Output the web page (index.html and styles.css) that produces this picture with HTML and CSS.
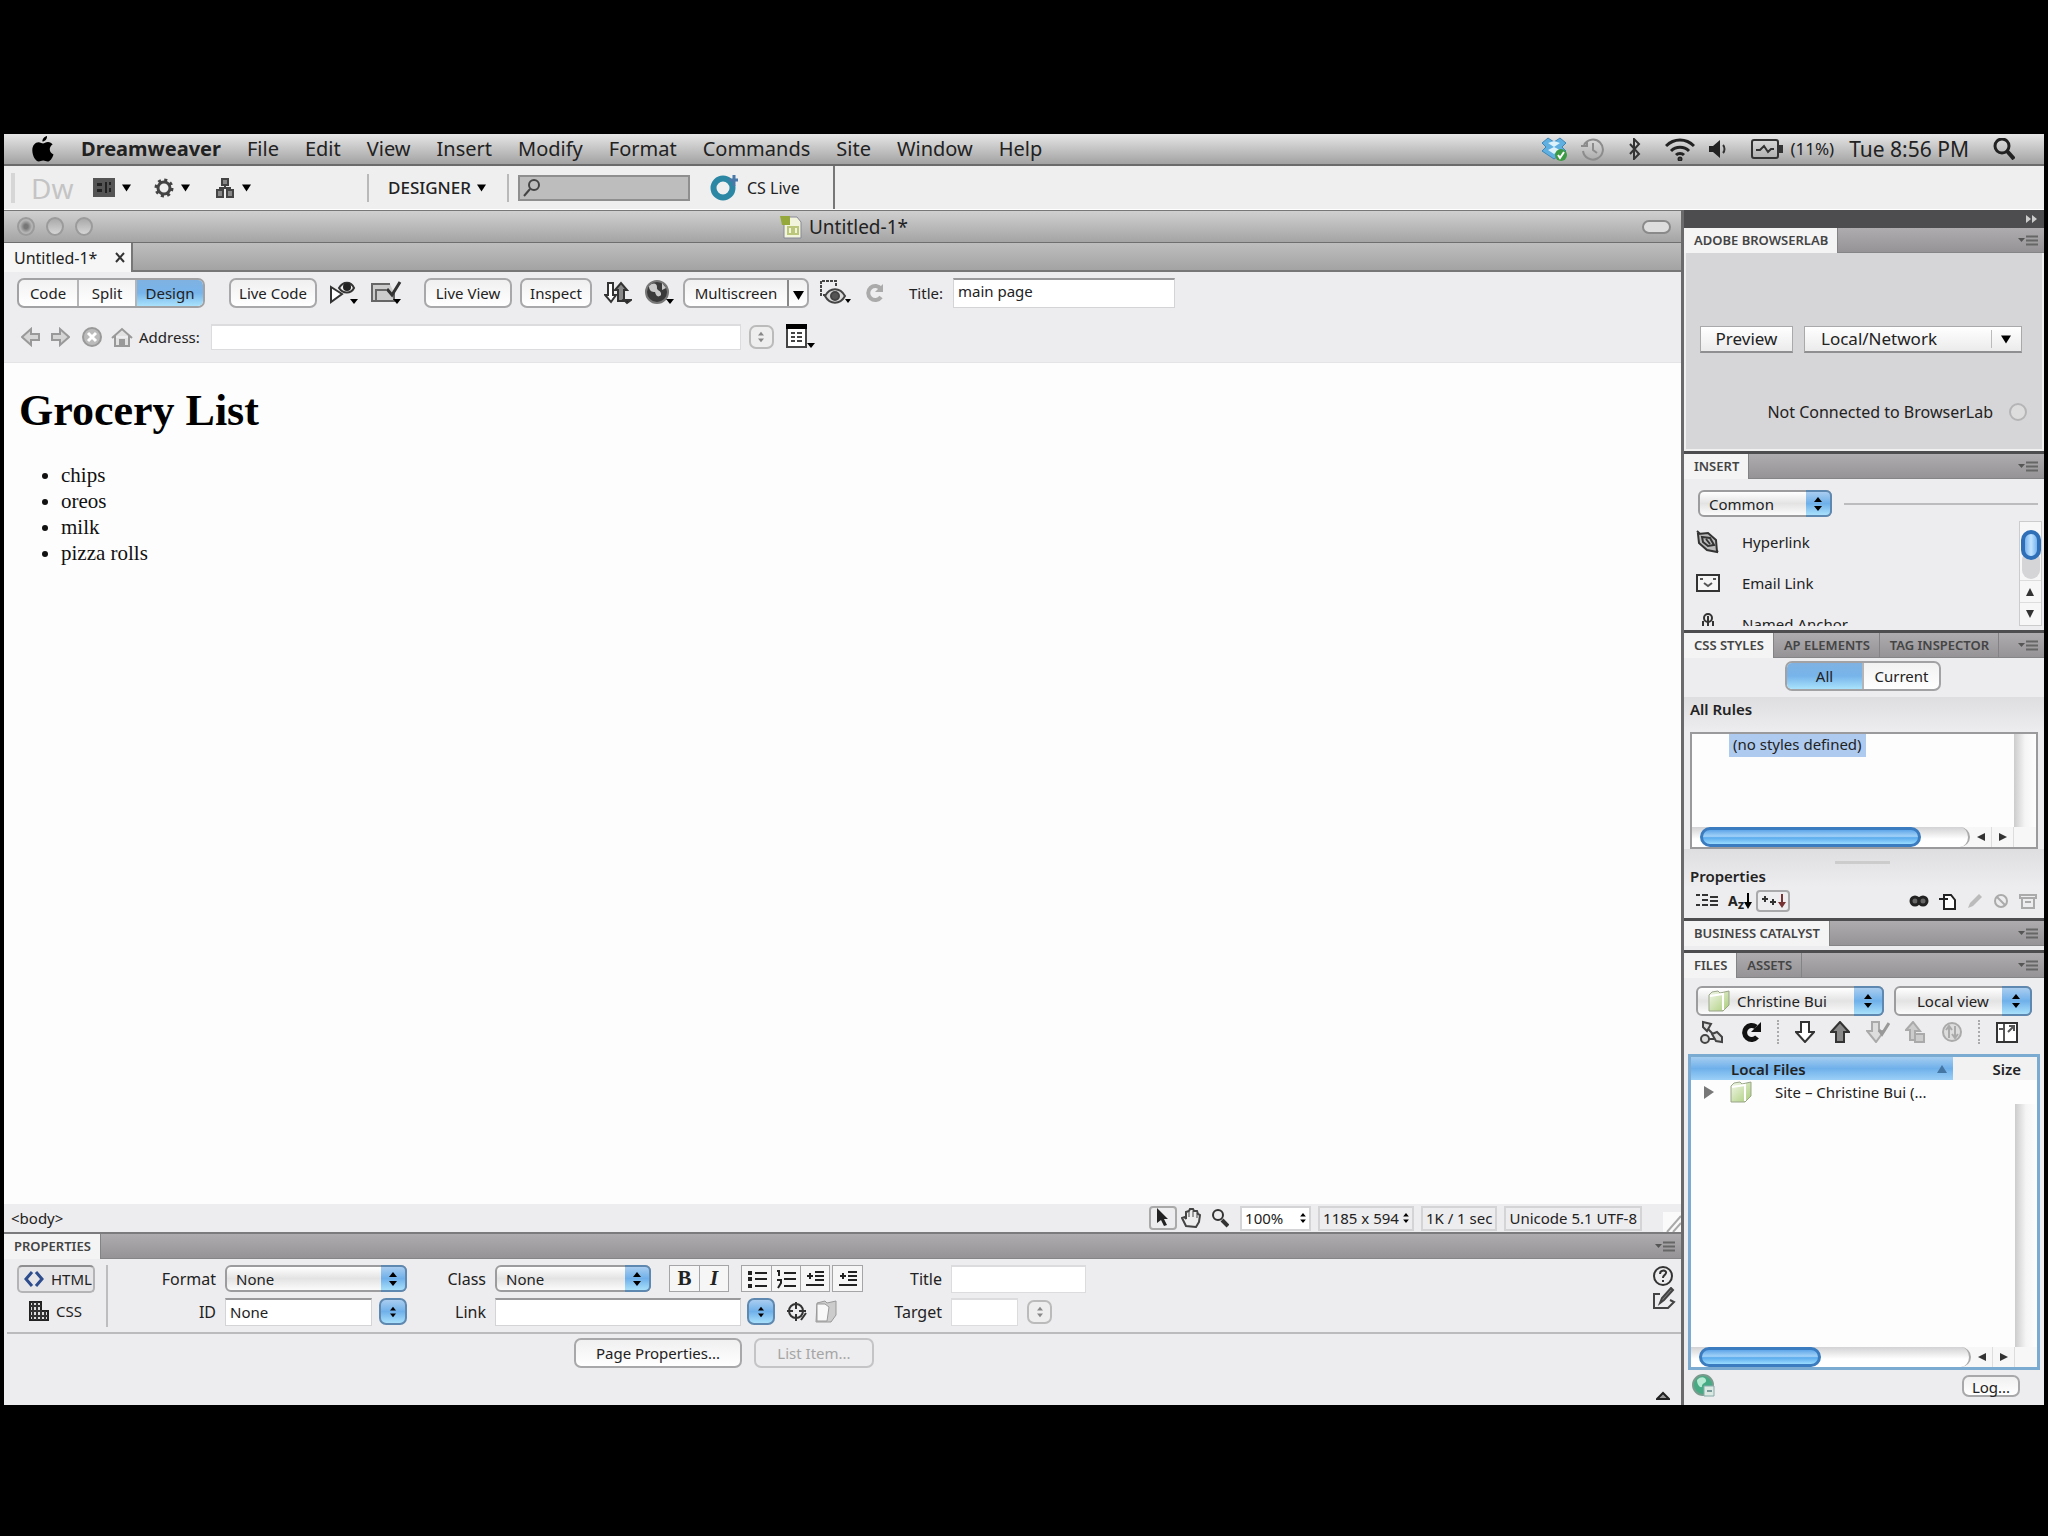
FILE: index.html
```html
<!DOCTYPE html>
<html lang="en">
<head>
  <meta charset="UTF-8">
  <title>Dreamweaver - Untitled-1*</title>
  <link rel="stylesheet" href="styles.css">
</head>
<body>

  <!-- Shared shapes -->
  <svg class="defs" width="0" height="0" aria-hidden="true">
    <defs>
      <linearGradient id="green" x1="0" y1="0" x2="1" y2="1">
        <stop offset="0" stop-color="#f4f8ec"/><stop offset="1" stop-color="#a9cc78"/>
      </linearGradient>
      <symbol id="down" viewBox="0 0 10 8"><path d="M0 0h10L5 8z"/></symbol>
      <symbol id="steps" viewBox="0 0 8 14"><path d="M4 0l4 5H0zM4 14l4-5H0z"/></symbol>
      <symbol id="panel-menu" viewBox="0 0 20 11"><path d="M0 3h7L3.500 7z"/><path d="M8 1.500h12M8 5.500h12M8 9.500h12" stroke="#666" stroke-width="2"/></symbol>
      <symbol id="folder" viewBox="0 0 24 24"><path d="M5 3l6-1 2 2 9-2v14l-6 6H2V6z" fill="url(#green)" stroke="#9aa58a"/><path d="M3 7l13-2v16" fill="none" stroke="#fff" stroke-width="2"/></symbol>
      <symbol id="arrow-down" viewBox="0 0 20 22"><path d="M6 1h8v10h5l-9 10-9-10h5z" stroke-width="2"/></symbol>
      <symbol id="arrow-up" viewBox="0 0 20 22"><path d="M6 21h8V11h5L10 1 1 11h5z" stroke-width="2"/></symbol>
    </defs>
  </svg>

  <div class="screen">

    <!-- System menu bar -->
    <header class="menubar">
      <svg class="apple" width="22" height="26" viewBox="0 0 22 26"><path d="M15 0c.3 3-2 5.500-4.600 5.600C10.200 3 12.500.5 15 0zM11 7.500c1.300 0 2.600-1.400 5-1.400 2 0 3.600 1 4.600 2.400-4.200 2.600-3.500 8.200.9 9.900C20.400 22 18 25.500 15.600 25.500c-1.700 0-2.400-1-4.400-1s-2.800 1-4.400 1C3.500 25.500.3 19.500.3 14.200c0-5 3-8 6.200-8 2 0 3.500 1.300 4.500 1.300z"/></svg>
      <nav class="menus">
        <button class="app-name">Dreamweaver</button>
        <button>File</button>
        <button>Edit</button>
        <button>View</button>
        <button>Insert</button>
        <button>Modify</button>
        <button>Format</button>
        <button>Commands</button>
        <button>Site</button>
        <button>Window</button>
        <button>Help</button>
      </nav>
      <div class="tray">
        <svg width="26" height="26" viewBox="0 0 26 26"><path d="M7 2l6 4 6-4 6 5-4 4 4 4-6 4-6 4-6-4-6-4 4-4-4-4z" fill="#5fb0e0" stroke="#3d87b8"/><path d="M7 7l6 4 6-4-6-2zM7 14l6-3 6 3-6 4z" fill="#def2fc"/><circle cx="20" cy="19" r="6" fill="#3c9a44"/><path d="M17 19l2 3 4-6" fill="none" stroke="#fff" stroke-width="2"/></svg>
        <svg width="24" height="24" viewBox="0 0 24 24" fill="none" stroke="#8c8c8c" stroke-width="2"><path d="M3 8a10 10 0 1 1-1 6M12 6v7l4 3M0 9h6V4"/></svg>
        <svg class="bluetooth" width="12" height="22" viewBox="0 0 12 22" fill="none" stroke="#333" stroke-width="2"><path d="M1 6l9 10-5 5V1l5 5L1 16"/></svg>
        <svg class="wifi" width="30" height="24" viewBox="0 0 30 24" fill="none" stroke="#222" stroke-width="3"><path d="M1 9c8-8 20-8 28 0M6 14c5-5 13-5 18 0M11 18c2-2 6-2 8 0"/><circle cx="15" cy="22" r="1" /></svg>
        <svg class="speaker" width="18" height="18" viewBox="0 0 18 18"><path d="M0 6h4l7-6v18l-7-6H0z" fill="#222"/><path d="M14 5c2 2 2 6 0 8" fill="none" stroke="#333" stroke-width="2"/></svg>
        <svg class="battery" width="32" height="20" viewBox="0 0 32 20" fill="none" stroke="#333" stroke-width="2"><rect x="1" y="1" width="26" height="18" rx="2"/><path d="M5 11h4l4-4 4 6 3-3h3"/><path d="M30 6v8" stroke-width="4"/></svg>
        <span class="percent">(11%)</span>
        <span class="clock">Tue 8:56 PM</span>
        <svg width="22" height="22" viewBox="0 0 22 22" fill="none" stroke="#222" stroke-width="3"><circle cx="9" cy="8" r="7"/><path d="M14 13l7 8" stroke-width="4"/></svg>
      </div>
    </header>

    <!-- Application bar -->
    <div class="appbar">
      <i class="grip"></i>
      <span class="dw">Dw</span>
      <button class="icon-menu" aria-label="Layout"><svg width="22" height="19" viewBox="0 0 22 19"><rect width="22" height="19" fill="#555"/><path d="M4 5h5v3H4zM4 11h5v3H4zM12 4h2v11h-2zM16 4h2v3h-2zM16 10h2v4h-2z" fill="#222"/></svg><svg width="9" height="8"><use href="#down"/></svg></button>
      <button class="icon-menu" aria-label="Extend"><svg width="20" height="20" viewBox="0 0 20 20" fill="none" stroke="#444"><circle cx="10" cy="10" r="6" stroke-width="3"/><circle cx="10" cy="10" r="8" stroke-width="3" stroke-dasharray="3 3.280"/></svg><svg width="9" height="8"><use href="#down"/></svg></button>
      <button class="icon-menu" aria-label="Site"><svg width="20" height="20" viewBox="0 0 20 20" fill="#888" stroke="#444" stroke-width="2"><path d="M7 1h6v6H7zM2 12h6v7H2zM12 12h6v7h-6z"/><path d="M10 6v4M5 13v-3h10v3" fill="none"/></svg><svg width="9" height="8"><use href="#down"/></svg></button>
      <i class="rule workspace-rule"></i>
      <button class="workspace">DESIGNER <svg width="9" height="8"><use href="#down"/></svg></button>
      <i class="rule"></i>
      <label class="search">
        <svg width="18" height="19" viewBox="0 0 18 19" fill="none" stroke="#444" stroke-width="2"><circle cx="11" cy="7" r="5"/><path d="M7 11l-6 7"/></svg>
        <input type="text" aria-label="Search">
      </label>
      <button class="cslive"><svg width="28" height="28" viewBox="0 0 28 28"><circle cx="13" cy="14" r="9.500" fill="none" stroke="#2c87a4" stroke-width="6"/><path d="M24 1v11M19 6h9" stroke="#4a78a8" stroke-width="3"/></svg>CS Live</button>
    </div>

    <div class="workarea">

      <!-- Document window -->
      <main class="document">
        <div class="titlebar">
          <div class="lights"><i class="dirty"></i><i></i><i></i></div>
          <div class="doc-title"><svg width="22" height="24" viewBox="0 0 22 24"><path d="M4 2h13l4 5v16H4z" fill="#f2f4dc" stroke="#889"/><path d="M0 1h10v9H2z" fill="#95a83c"/><path d="M8 12h4v7H8zM14 12h4v7h-4z" fill="none" stroke="#bcc77c" stroke-width="2"/></svg>Untitled-1*</div>
          <button class="pill" aria-label="Toolbar"></button>
        </div>
        <div class="doc-tabs">
          <div class="doc-tab">Untitled-1* <button aria-label="Close"><svg width="10" height="11" viewBox="0 0 10 11"><path d="M1 1l8 9M9 1l-8 9" stroke="#333" stroke-width="2"/></svg></button></div>
        </div>

        <div class="toolbar">
          <div class="segments">
            <button>Code</button><button>Split</button><button class="on">Design</button>
          </div>
          <button class="btn live-code">Live Code</button>
          <button class="tool play" aria-label="Live options"><svg width="30" height="24" viewBox="0 0 30 24"><path d="M2 6l11 7-11 8z" fill="#fff" stroke="#333" stroke-width="2"/><path d="M10 7c4-7 12-7 15 0-3 6-11 6-15 0z" fill="#eee" stroke="#333" stroke-width="2"/><circle cx="18" cy="6" r="4" fill="#222"/><path d="M21 18h8l-4 5z"/></svg></button>
          <button class="tool check" aria-label="Validate"><svg width="32" height="26" viewBox="0 0 32 26"><path d="M24 13v8H2V4h18" fill="#ccc" stroke="#666" stroke-width="2"/><path d="M6 20V10h10" fill="none" stroke="#666" stroke-width="2"/><path d="M17 9l5 6 8-13" fill="none" stroke="#333" stroke-width="3"/><path d="M23 19h8l-4 5z"/></svg></button>
          <button class="btn live-view">Live View</button>
          <button class="btn inspect">Inspect</button>
          <button class="tool transfer" aria-label="File management"><svg width="28" height="24" viewBox="0 0 28 24" stroke="#333" stroke-width="2"><path d="M4 2h5v12h3l-5 7-6-7h3z" fill="#fff"/><path d="M14 20h6V9h3l-6-7-6 7h3z" fill="#888"/><path d="M20 19h7l-4 3z" fill="#000"/></svg></button>
          <button class="tool globe" aria-label="Preview in browser"><svg width="30" height="26" viewBox="0 0 30 26"><circle cx="12" cy="12" r="11" fill="#3a3a3a" stroke="#777" stroke-width="2"/><path d="M4 6c4-4 8-3 8 1-1 4 5 3 4 8-3 3-5 1-6-3C7 12 4 11 4 6zM17 3l4 5-4 2z" fill="#c9c9c9"/><path d="M21 19h8l-4 5z"/></svg></button>
          <div class="split-btn"><button>Multiscreen</button><button aria-label="More"><svg width="11" height="9"><use href="#down"/></svg></button></div>
          <button class="tool eye" aria-label="Visual aids"><svg width="32" height="26" viewBox="0 0 32 26" fill="none" stroke="#444" stroke-width="2"><path d="M6 15H1V1h15v5" stroke-dasharray="3 1"/><path d="M5 16c5-9 15-9 20 0-5 9-15 9-20 0z" fill="#ddd"/><circle cx="15" cy="16" r="4" fill="#555"/><path d="M25 19h6l-3 4z" fill="#000" stroke="none"/></svg></button>
          <button class="tool reload" aria-label="Refresh"><svg width="20" height="20" viewBox="0 0 20 20" fill="none" stroke="#aaa" stroke-width="4"><path d="M15 14a7 7 0 1 1 0-8"/><path d="M17 1v8h-8z" fill="#aaa" stroke="none"/></svg></button>
          <label class="title-field">Title: <input type="text" value="main page"></label>
        </div>

        <div class="addressbar">
          <svg width="20" height="20" viewBox="0 0 20 20" fill="#d5d5d5" stroke="#999" stroke-width="2"><path d="M1 10l9-8v5h8v6h-8v5z"/></svg>
          <svg width="20" height="20" viewBox="0 0 20 20" fill="#d5d5d5" stroke="#999" stroke-width="2"><path d="M19 10l-9-8v5H2v6h8v5z"/></svg>
          <svg class="stop" width="20" height="20" viewBox="0 0 20 20"><circle cx="10" cy="10" r="9" fill="#bbb" stroke="#999" stroke-width="2"/><path d="M6 6l8 8M14 6l-8 8" stroke="#fff" stroke-width="3"/></svg>
          <svg class="home" width="22" height="20" viewBox="0 0 22 20" fill="#e2e2e2" stroke="#999" stroke-width="2"><path d="M1 11l10-9 10 9M4 9v10h14V9"/><path d="M9 13h4v6H9z" fill="#999"/></svg>
          <label class="address">Address: <input type="text"></label>
          <button class="stepper off" aria-label="History"><svg width="6" height="12"><use href="#steps"/></svg></button>
          <button class="tool" aria-label="Options"><svg width="30" height="26" viewBox="0 0 30 26"><path d="M2 3h19v20H2z" fill="#fff" stroke="#444" stroke-width="2"/><path d="M1 0h21v5H1z"/><path d="M6 9h4M6 13h4M6 17h4M12 9h5M12 13h5M12 17h5" stroke="#444" stroke-width="2"/><path d="M22 19h8l-4 5z"/></svg></button>
        </div>

        <article class="canvas">
          <h1>Grocery List</h1>
          <ul>
            <li>chips</li>
            <li>oreos</li>
            <li>milk</li>
            <li>pizza rolls</li>
          </ul>
        </article>

        <div class="statusbar">
          <span class="tag">&lt;body&gt;</span>
          <button class="pressed" aria-label="Select"><svg width="14" height="19" viewBox="0 0 14 19"><path d="M1 0l11 11H8l3 6-3 1-3-6-4 3z" fill="#222"/></svg></button>
          <button class="hand" aria-label="Hand"><svg width="20" height="20" viewBox="0 0 20 20"><path d="M5 18L1 10l3-1 1 2V4l3-1 1-2h3l1 2h3l1 3 2 1-1 7-3 5z" fill="#eee" stroke="#444" stroke-width="2"/><path d="M8 4v5M12 3v6M16 5v5" stroke="#444"/></svg></button>
          <button class="zoom" aria-label="Zoom"><svg width="18" height="19" viewBox="0 0 18 19" fill="none" stroke="#333" stroke-width="2"><circle cx="7" cy="6" r="5"/><path d="M11 11l6 6" stroke-width="4"/></svg></button>
          <div class="status-select zoom-level"><select aria-label="Magnification"><option>100%</option></select><svg width="6" height="10"><use href="#steps"/></svg></div>
          <div class="status-cell">1185 x 594 <svg width="6" height="10"><use href="#steps"/></svg></div>
          <div class="status-cell">1K / 1 sec</div>
          <div class="status-cell">Unicode 5.1 UTF-8</div>
          <svg class="resize" width="18" height="20" viewBox="0 0 18 20"><path d="M0 0h18v20H0z" fill="#fafafa"/><path d="M4 20L18 4M10 20l8-9" stroke="#aaa" stroke-width="2"/></svg>
        </div>

        <!-- Property inspector -->
        <section class="inspector">
          <div class="tabs">
            <button class="tab on">PROPERTIES</button>
            <svg class="menu" width="20" height="11"><use href="#panel-menu"/></svg>
          </div>
          <div class="inspector-main">
            <div class="modes">
              <button class="mode on"><svg width="20" height="16" viewBox="0 0 20 16" fill="none" stroke="#2d4d8e" stroke-width="3"><path d="M8 1L2 8l6 7M12 1l6 7-6 7"/></svg>HTML</button>
              <button class="mode"><svg width="20" height="20" viewBox="0 0 20 20"><path d="M1 1h11v9h7v9H1z" fill="#ddd" stroke="#222" stroke-width="2"/><path d="M4 1v18M8 1v18M12 9v10M16 10v9M1 5h11M1 10h11M1 15h18" stroke="#333" stroke-width="2"/></svg>CSS</button>
            </div>
            <form class="fields">
              <label for="format">Format</label>
              <div class="popup wide"><select id="format"><option>None</option></select><span class="cap"><svg width="8" height="14"><use href="#steps"/></svg></span></div>
              <label for="class">Class</label>
              <div class="cell">
                <div class="popup"><select id="class"><option>None</option></select><span class="cap"><svg width="8" height="14"><use href="#steps"/></svg></span></div>
                <div class="squares"><button type="button" class="bold">B</button><button type="button" class="italic">I</button></div>
                <div class="squares">
                  <button type="button" aria-label="Unordered list"><svg width="20" height="20" viewBox="0 0 20 20" stroke="#222" stroke-width="2"><path d="M8 4h12M8 10h12M8 17h12"/><path d="M1 4h4M1 10h4M1 17h4" stroke-width="4"/></svg></button>
                  <button type="button" aria-label="Ordered list"><svg width="20" height="20" viewBox="0 0 20 20" stroke="#222" stroke-width="2" fill="none"><path d="M8 4h12M8 10h12M8 17h12M1 2h2v5M1 11h4v3l-3 5"/></svg></button>
                  <button type="button" aria-label="Outdent"><svg width="20" height="20" viewBox="0 0 20 20" stroke="#222" stroke-width="2"><path d="M10 3h9M10 7h9M10 11h9M1 16h18"/><path d="M5 4v6M2 7h6"/></svg></button>
                </div>
                <div class="squares last"><button type="button" aria-label="Indent"><svg width="20" height="20" viewBox="0 0 20 20" stroke="#222" stroke-width="2"><path d="M10 3h9M10 7h9M10 11h9M1 16h18"/><path d="M5 4v6M2 7h6"/></svg></button></div>
              </div>
              <label for="title">Title</label>
              <input id="title" type="text" class="flat">

              <label for="id">ID</label>
              <div class="cell"><input id="id" type="text" class="id" value="None"><button type="button" class="stepper" aria-label="IDs"><svg width="6" height="12"><use href="#steps"/></svg></button></div>
              <label for="link">Link</label>
              <div class="cell">
                <input id="link" type="text" class="link"><button type="button" class="stepper" aria-label="Links"><svg width="6" height="12"><use href="#steps"/></svg></button>
                <svg class="target" width="20" height="20" viewBox="0 0 20 20" fill="none" stroke="#333" stroke-width="2"><circle cx="9" cy="9" r="7"/><path d="M9 0v7M9 12v7M0 9h6M12 9h7M14 18l5-7" /></svg>
                <svg width="26" height="25" viewBox="0 0 26 25"><path d="M4 4l8-2 2 2 9-2v14l-5 7H3z" fill="#ccc" stroke="#999"/><path d="M4 5h8l4 3-2 14H4z" fill="#f8f8f8" stroke="#999"/></svg>
              </div>
              <label for="target">Target</label>
              <div class="cell"><input id="target" type="text" class="flat target-input"><button type="button" class="stepper off" aria-label="Targets"><svg width="6" height="12"><use href="#steps"/></svg></button></div>
            </form>
            <div class="help">
              <svg width="22" height="22" viewBox="0 0 22 22" fill="none" stroke="#333" stroke-width="2"><circle cx="11" cy="11" r="9"/><path d="M8 9c0-5 7-4 6-1-1 3-3 2-3 5M11 15v2"/></svg>
              <svg width="24" height="24" viewBox="0 0 24 24" fill="none" stroke="#444" stroke-width="2"><path d="M8 7H2v14h14l6-6-4-2"/><path d="M8 16l2-5 9-10 2 2-9 10z" fill="#888"/></svg>
            </div>
          </div>
          <div class="inspector-foot">
            <button class="btn">Page Properties...</button>
            <button class="btn" disabled>List Item...</button>
            <svg class="collapse" width="14" height="9" viewBox="0 0 14 9"><path d="M1 8l6-6 6 6z" fill="#999" stroke="#222" stroke-width="2"/></svg>
          </div>
        </section>
      </main>

      <!-- Panel dock -->
      <aside class="dock">
        <div class="dock-top"><svg width="12" height="8" viewBox="0 0 12 8"><path d="M0 0l5 4-5 4zM6 0l5 4-5 4z" fill="#ccc"/></svg></div>

        <section class="panel browserlab">
          <div class="tabs"><button class="tab on">ADOBE BROWSERLAB</button><svg class="menu" width="20" height="11"><use href="#panel-menu"/></svg></div>
          <div class="lab-body">
            <div class="lab-row">
              <button class="lab-btn">Preview</button>
              <div class="lab-select"><select aria-label="Preview source"><option>Local/Network</option></select><svg width="10" height="9"><use href="#down"/></svg></div>
            </div>
            <div class="lab-status">Not Connected to BrowserLab <i></i></div>
          </div>
        </section>

        <section class="panel insert">
          <div class="tabs"><button class="tab on">INSERT</button><svg class="menu" width="20" height="11"><use href="#panel-menu"/></svg></div>
          <div class="insert-head">
            <div class="popup"><select aria-label="Category"><option>Common</option></select><span class="cap"><svg width="8" height="14"><use href="#steps"/></svg></span></div>
            <hr>
          </div>
          <div class="insert-body">
            <ul>
              <li><svg width="24" height="24" viewBox="0 0 24 24" fill="none" stroke="#333" stroke-width="2"><path d="M1 1l21 21"/><path d="M2 4l10-1 8 7 1 12-10-2-8-7z" fill="#bbb"/><path d="M6 7l8 1 4 7-6 1-5-4zM10 9l4 5"/></svg>Hyperlink</li>
              <li><svg width="24" height="18" viewBox="0 0 24 18" fill="none" stroke="#333" stroke-width="2"><rect x="1" y="1" width="22" height="16" fill="#f5f5f5"/><path d="M4 5h3M17 5h3M8 9l4 3 4-3" stroke="#555"/></svg>Email Link</li>
              <li><svg width="24" height="24" viewBox="0 0 24 24" fill="none" stroke="#333" stroke-width="2"><circle cx="12" cy="6" r="4"/><path d="M12 4v14M7 9v10M17 9v10M2 17h20"/></svg>Named Anchor</li>
            </ul>
            <div class="vscroll"><i></i><b><svg width="8" height="8" viewBox="0 0 8 8"><path d="M4 0l4 8H0z"/></svg></b><b><svg width="8" height="8" viewBox="0 0 8 8"><path d="M4 8l4-8H0z"/></svg></b></div>
          </div>
        </section>

        <section class="panel css">
          <div class="tabs"><button class="tab on">CSS STYLES</button><button class="tab">AP ELEMENTS</button><button class="tab">TAG INSPECTOR</button><svg class="menu" width="20" height="11"><use href="#panel-menu"/></svg></div>
          <div class="segments scope"><button class="on">All</button><button>Current</button></div>
          <div class="css-head">All Rules</div>
          <div class="rules">
            <div class="rules-main"><div class="rules-list"><span>(no styles defined)</span></div><div class="gutter"></div></div>
            <div class="hscroll"><div class="track"><i class="long"></i></div><b><svg width="8" height="8" viewBox="0 0 8 8"><path d="M0 4l8-4v8z"/></svg></b><b><svg width="8" height="8" viewBox="0 0 8 8"><path d="M8 4L0 0v8z"/></svg></b></div>
          </div>
          <div class="css-head props"><i></i>Properties</div>
          <div class="css-tools">
            <svg width="22" height="16" viewBox="0 0 22 16" stroke="#333" stroke-width="2"><path d="M0 2h4M0 12h4M6 2h6M6 7h6M6 12h6M14 4h8M14 8h8M14 12h8"/></svg>
            <span class="az">A<small>z</small><svg width="8" height="16" viewBox="0 0 8 16"><path d="M3 0h2v9h3l-4 7-4-7h3z"/></svg></span>
            <button class="sorted" aria-label="Show only set properties"><svg width="26" height="16" viewBox="0 0 26 16"><path d="M2 6h6M5 3v6M10 9h6M13 6v6" stroke="#333" stroke-width="2"/><path d="M21 1h2v8h3l-4 6-4-6h3z" fill="#733"/></svg></button>
            <svg class="push" width="20" height="12" viewBox="0 0 20 12" fill="#666" stroke="#222" stroke-width="3"><rect x="2" y="2" width="8" height="8" rx="4"/><rect x="10" y="2" width="8" height="8" rx="4"/></svg>
            <svg width="18" height="18" viewBox="0 0 18 18" fill="#fff" stroke="#222" stroke-width="2"><path d="M5 3h7l4 5v9H5z"/><path d="M0 7h9M5 3v8"/></svg>
            <svg width="16" height="16" viewBox="0 0 16 16"><path d="M1 15l2-5 9-9 3 3-9 9z" fill="#bbb"/></svg>
            <svg width="16" height="16" viewBox="0 0 16 16" fill="none" stroke="#aaa" stroke-width="2"><circle cx="8" cy="8" r="6"/><path d="M4 4l8 8"/></svg>
            <svg width="18" height="16" viewBox="0 0 18 16" fill="none" stroke="#aaa" stroke-width="2"><path d="M1 2h16v3H1zM3 5v10h12V5M6 9h6"/></svg>
          </div>
        </section>

        <section class="panel catalyst">
          <div class="tabs"><button class="tab on">BUSINESS CATALYST</button><svg class="menu" width="20" height="11"><use href="#panel-menu"/></svg></div>
        </section>

        <section class="panel files">
          <div class="tabs"><button class="tab on">FILES</button><button class="tab">ASSETS</button><svg class="menu" width="20" height="11"><use href="#panel-menu"/></svg></div>
          <div class="files-head">
            <div class="popup site"><svg class="folder" width="24" height="24"><use href="#folder"/></svg><select aria-label="Site"><option>Christine Bui</option></select><span class="cap"><svg width="8" height="14"><use href="#steps"/></svg></span></div>
            <div class="popup view"><select aria-label="View"><option>Local view</option></select><span class="cap"><svg width="8" height="14"><use href="#steps"/></svg></span></div>
          </div>
          <div class="files-tools">
            <svg width="24" height="24" viewBox="0 0 24 24" fill="#ddd" stroke="#444" stroke-width="2"><path d="M3 2l8 2-4 7-4-4z"/><circle cx="5" cy="19" r="4"/><path d="M12 14l5-2 5 5v5l-6-1zM8 9l5 5M9 19h5"/></svg>
            <svg width="22" height="20" viewBox="0 0 22 20" fill="none" stroke="#111" stroke-width="5"><path d="M17 15a7 7 0 1 1-1-10"/><path d="M21 0v10H11z" fill="#111" stroke="none"/></svg>
            <i></i>
            <svg width="20" height="22" fill="#fff" stroke="#333"><use href="#arrow-down"/></svg>
            <svg width="20" height="22" fill="#888" stroke="#333"><use href="#arrow-up"/></svg>
            <svg width="24" height="22" viewBox="0 0 24 22" fill="#ddd" stroke="#aaa" stroke-width="2"><path d="M6 1h7v9h5l-8 11-9-11h5z"/><path d="M13 9l3 4 7-11" fill="none" stroke="#999" stroke-width="3"/></svg>
            <svg width="20" height="22" viewBox="0 0 20 22" fill="#ccc" stroke="#aaa" stroke-width="2"><path d="M5 19h5V10h5L8 1 1 9h4z"/><path d="M10 13h9v8h-9z"/></svg>
            <svg width="22" height="22" viewBox="0 0 22 22" fill="#ddd" stroke="#aaa" stroke-width="2"><circle cx="11" cy="11" r="9"/><path d="M8 6v11M5 9l3-4 3 4M14 16V5M11 13l3 4 3-4"/></svg>
            <i></i>
            <svg width="22" height="22" viewBox="0 0 22 22" fill="#fff" stroke="#333" stroke-width="2"><path d="M1 2h20v19H1z"/><path d="M8 3v17M3 8h4M12 11l6-6M13 5h5v5" stroke="#555" fill="none"/></svg>
          </div>
          <div class="files-box">
            <table>
              <thead><tr><th class="name">Local Files <svg width="10" height="8" viewBox="0 0 10 8"><path d="M5 0l5 8H0z" fill="#4577a5"/></svg></th><th class="size">Size</th></tr></thead>
              <tbody><tr><td colspan="2"><div class="file"><svg width="10" height="13" viewBox="0 0 10 13"><path d="M0 0l10 6-10 7z" fill="#777"/></svg><svg class="folder" width="24" height="24"><use href="#folder"/></svg>Site – Christine Bui (...</div></td></tr></tbody>
            </table>
            <div class="files-space"><div class="gutter"></div></div>
            <div class="hscroll"><div class="track"><i class="short"></i></div><b><svg width="8" height="8" viewBox="0 0 8 8"><path d="M0 4l8-4v8z"/></svg></b><b><svg width="8" height="8" viewBox="0 0 8 8"><path d="M8 4L0 0v8z"/></svg></b></div>
          </div>
          <div class="files-foot">
            <svg width="24" height="24" viewBox="0 0 24 24"><circle cx="11" cy="11" r="10" fill="#46ab85" stroke="#789b8d" stroke-width="2"/><path d="M5 6c4-4 8-3 9 0s-4 3-4 6-5 0-5-6z" fill="#b6ead2"/><path d="M12 12h10v10H12z" fill="#dce9e3" stroke="#8aa"/><path d="M15 17h5" stroke="#799" stroke-width="2"/></svg>
            <button class="btn log">Log...</button>
          </div>
        </section>
      </aside>
    </div>
  </div>

</body>
</html>
```

FILE: styles.css
```css
* {
  box-sizing: border-box;
}

body {
  margin: 0;
  min-height: 100vh;
  display: flex;
  padding: 134px 4px 131px;
  background-color: #000;
  font-family: "Noto Sans", "Open Sans", sans-serif;
  font-size: 15px;
  line-height: 20px;
  color: #222;
}

button, input, select {
  font: inherit;
  color: inherit;
  margin: 0;
  padding: 0;
  border: 0;
  border-radius: 0;
  background: none;
}

select {
  appearance: none;
  width: 100%;
  height: 100%;
}

svg {
  display: block;
  flex: none;
}

.defs {
  position: absolute;
}

.screen {
  flex: 1;
  min-width: 0;
  display: flex;
  flex-direction: column;
  background-color: #edecee;
}

/* menu bar */
.menubar {
  display: flex;
  align-items: center;
  height: 32px;
  padding: 0 29px 0 28px;
  background: linear-gradient(#e6e6e6, #a2a2a2);
  border-bottom: 2px solid #6b6b6b;
  font-size: 20px;
  line-height: 28px;
}

.menus {
  display: flex;
  gap: 26px;
  margin-left: 27px;
}

.app-name {
  font-weight: bold;
}

.tray {
  display: flex;
  align-items: center;
  margin-left: auto;
}

.tray svg + svg {
  margin-left: 14px;
}

.tray .bluetooth,
.tray .wifi {
  margin-left: 24px;
}

.tray .battery {
  margin-left: 24px;
}

.percent {
  margin-left: 7px;
  font-size: 17px;
}

.clock {
  margin: 0 24px 0 15px;
  font-size: 21px;
}

/* application bar */
.appbar {
  display: flex;
  align-items: center;
  height: 44px;
  padding-left: 7px;
  background-color: #efeff0;
  border-bottom: 1px solid #fff;
  font-size: 17px;
}

.grip {
  width: 4px;
  height: 30px;
  background-color: #d6d6d6;
}

.dw {
  width: 62px;
  padding-left: 16px;
  font-size: 28px;
  line-height: 32px;
  color: #c4c4c4;
}

.icon-menu {
  display: flex;
  align-items: center;
  gap: 7px;
  width: 61px;
  padding-left: 16px;
}

.rule {
  width: 2px;
  height: 28px;
  background-color: #b9b9b9;
}

.workspace-rule {
  margin-left: 107px;
}

.workspace {
  display: flex;
  align-items: center;
  gap: 6px;
  width: 138px;
  padding-left: 19px;
  font-weight: 500;
}

.search {
  display: flex;
  align-items: center;
  width: 172px;
  height: 26px;
  margin-left: 9px;
  padding-left: 3px;
  background-color: #bdbdbd;
  border: 2px solid #8f8f8f;
}

.search input {
  width: 100%;
}

.cslive {
  display: flex;
  align-items: center;
  gap: 9px;
  align-self: stretch;
  width: 145px;
  padding-left: 20px;
  border-right: 2px solid #777;
  font-size: 16px;
}

.workarea {
  flex: 1;
  display: flex;
  background-color: #4d4d4f;
}

/* document window */
.document {
  flex: 1;
  min-width: 0;
  display: flex;
  flex-direction: column;
  border-right: 3px solid #6a6a6c;
  background-color: #edecee;
}

.titlebar {
  display: grid;
  grid-template-columns: 1fr auto 1fr;
  align-items: center;
  height: 33px;
  padding: 0 10px 0 13px;
  background: linear-gradient(#d0d0d0, #a4a4a4);
  border-top: 1px solid #777;
  border-bottom: 1px solid #6f6f6f;
}

.lights {
  display: flex;
  gap: 11px;
}

.lights i {
  width: 18px;
  height: 19px;
  border-radius: 50%;
  border: 2px solid #9b9b9b;
  background: linear-gradient(#aaa, #d5d5d5);
}

.lights .dirty {
  background: radial-gradient(#777 20%, #b5b5b5 60%);
}

.doc-title {
  display: flex;
  align-items: center;
  gap: 7px;
  font-size: 19px;
}

.pill {
  justify-self: end;
  width: 29px;
  height: 14px;
  border: 2px solid #8a8a8a;
  border-radius: 8px;
  background-color: #ddd;
}

.doc-tabs {
  height: 29px;
  background: linear-gradient(#bebebe, #a3a3a3);
  border-bottom: 2px solid #777;
}

.doc-tab {
  display: flex;
  align-items: center;
  justify-content: space-between;
  width: 129px;
  height: 29px;
  padding: 0 6px 0 10px;
  background-color: #f6f6f7;
  border-right: 2px solid #777;
  font-size: 16px;
}

.toolbar {
  display: flex;
  align-items: center;
  height: 41px;
  padding: 0 13px;
}

.segments {
  display: flex;
  height: 30px;
  border: 2px solid #a2a2a4;
  border-radius: 7px;
  background: linear-gradient(#f2f2f3, #fff);
  overflow: hidden;
}

.segments button {
  width: 58px;
}

.segments button + button {
  border-left: 2px solid #b5b5b7;
}

.segments .on {
  background: linear-gradient(#7fb2e2, #77b4ea 50%, #a9e2fc);
}

.toolbar .segments .on {
  width: 68px;
}

.btn {
  height: 30px;
  border: 2px solid #a8a8aa;
  border-radius: 7px;
  background: linear-gradient(#f0f0f1, #fff);
}

.btn:disabled {
  color: #a5a5a5;
  border-color: #c4c4c6;
  background: none;
}

.live-code {
  width: 88px;
  margin-left: 24px;
}

.live-view {
  width: 88px;
  margin-left: 22px;
}

.inspect {
  width: 72px;
  margin-left: 8px;
}

.play,
.transfer {
  margin-left: 12px;
}

.check,
.eye {
  margin-left: 11px;
}

.globe {
  margin-left: 13px;
}

.reload {
  margin-left: 14px;
}

.split-btn {
  display: flex;
  width: 126px;
  height: 30px;
  margin-left: 8px;
  border: 2px solid #a8a8aa;
  border-radius: 7px;
  background: linear-gradient(#f0f0f1, #fff);
}

.split-btn button {
  flex: 1;
}

.split-btn button + button {
  flex: none;
  width: 20px;
  padding: 6px 0 0 4px;
  border-left: 2px solid #888;
}

.title-field {
  display: flex;
  align-items: center;
  gap: 10px;
  margin-left: 23px;
}

input {
  height: 28px;
  padding: 0 4px;
  background-color: #fff;
  border: 1px solid #d4d4d6;
  border-top: 2px solid #9a9a9c;
}

.title-field input {
  width: 222px;
  height: 30px;
  padding-bottom: 4px;
}

.search input {
  height: 20px;
  background: none;
  border: 0;
}

.addressbar {
  display: flex;
  align-items: center;
  height: 50px;
  padding: 0 17px 1px;
  border-bottom: 1px solid #e4e4e6;
}

.addressbar svg + svg {
  margin-left: 9px;
}

.addressbar .stop {
  margin-left: 12px;
}

.address {
  display: flex;
  align-items: center;
  gap: 11px;
  margin: 0 8px 0 6px;
}

.address input {
  width: 530px;
  height: 26px;
  border-color: #dcdcde;
}

.stepper {
  display: flex;
  align-items: center;
  justify-content: center;
  width: 28px;
  height: 27px;
  border: 2px solid #5f88b0;
  border-radius: 7px;
  background: linear-gradient(#a9cdf0, #6fb0ea 50%, #a8e0fb);
}

.stepper.off {
  width: 25px;
  height: 24px;
  border-color: #bbb;
  background: #eee;
  fill: #888;
}

.addressbar .tool {
  margin-left: 11px;
}

.canvas {
  flex: 1;
  padding: 22px 15px;
  background-color: #fdfdfd;
  font-family: "Liberation Serif", serif;
  color: #111;
}

.canvas h1 {
  margin: 0 0 25px;
  font-size: 44px;
  line-height: 52px;
  color: #000;
}

.canvas ul {
  margin: 0;
  padding-left: 42px;
  font-size: 21px;
  line-height: 26px;
}

.statusbar {
  display: flex;
  align-items: center;
  height: 28px;
  padding: 0 0 0 7px;
}

.tag {
  margin-right: auto;
}

.pressed {
  display: flex;
  justify-content: center;
  width: 28px;
  height: 24px;
  border: 2px solid #aaa;
  border-radius: 4px;
}

.hand {
  margin: 0 10px 0 4px;
}

.zoom {
  margin-right: 11px;
}

.status-select,
.status-cell {
  display: flex;
  align-items: center;
  gap: 4px;
  height: 25px;
  margin-right: 7px;
  padding: 0 3px;
  border: 2px solid #d4d4d6;
}

.zoom-level {
  width: 71px;
  background-color: #fff;
}

.resize {
  margin-left: 14px;
  align-self: flex-end;
}

/* tab strips */
.tabs {
  display: flex;
  height: 25px;
  padding-right: 6px;
  background: linear-gradient(#aeacaf, #959396);
  border-bottom: 1px solid #858587;
}

.tab {
  height: 25px;
  padding: 0 9px 2px 10px;
  border-right: 1px solid #838385;
  font-size: 13px;
  font-weight: 600;
  color: #444;
  white-space: nowrap;
}

.tab.on {
  background-color: #f4f4f5;
}

.tabs .menu {
  margin: 7px 0 0 auto;
  fill: #555;
}

/* property inspector */
.inspector {
  height: 173px;
  border-top: 2px solid #7b7b7d;
}

.inspector-main {
  display: flex;
  height: 75px;
  margin-left: 3px;
  padding: 6px 5px 0 10px;
  border-bottom: 2px solid #bbbbbd;
}

.modes {
  width: 91px;
  height: 62px;
  border-right: 2px solid #bdbdbf;
}

.mode {
  display: flex;
  align-items: center;
  gap: 7px;
  width: 78px;
  height: 28px;
  padding-left: 12px;
  margin-bottom: 4px;
}

.mode.on {
  padding-left: 5px;
  border: 2px solid #b4b4b6;
  border-top-color: #8f8f91;
  border-radius: 5px;
  background-color: #e6e6e8;
}

.fields {
  display: grid;
  grid-template-columns: 104px 182px 70px 368px 70px 135px;
  grid-template-rows: 27px 27px;
  gap: 6px 9px;
  align-items: center;
  align-content: start;
  margin-left: 4px;
}

.fields label {
  font-size: 16px;
  text-align: right;
}

.cell {
  display: flex;
  align-items: center;
}

.popup {
  position: relative;
  height: 27px;
  border: 2px solid #9c9c9e;
  border-radius: 6px;
  background: linear-gradient(#fff, #e3e3e4 50%, #fbfbfb);
}

.popup select {
  padding-left: 9px;
}

.popup .cap {
  position: absolute;
  top: -2px;
  right: -2px;
  bottom: -2px;
  display: flex;
  align-items: center;
  justify-content: center;
  width: 26px;
  border: 2px solid #5f88b0;
  border-left: 0;
  border-radius: 0 6px 6px 0;
  background: linear-gradient(#a9cdf0, #6fb0ea 50%, #a8e0fb);
  pointer-events: none;
}

.cell .popup {
  width: 156px;
  margin-right: 18px;
}

.squares {
  display: flex;
  height: 27px;
  margin-right: 12px;
  border: 1px solid #a5a5a7;
  background-color: #f6f6f7;
}

.squares button {
  display: flex;
  align-items: center;
  justify-content: center;
  width: 29px;
}

.squares button + button {
  border-left: 1px solid #a5a5a7;
}

.squares:nth-child(3) {
  margin-right: 2px;
}

.squares.last {
  margin-right: 0;
}

.bold,
.italic {
  font: bold 21px "Liberation Serif", serif;
}

.italic {
  font-style: italic;
}

.flat {
  border-color: #dcdcde;
}

.id {
  width: 147px;
  margin-right: 7px;
}

.link {
  width: 246px;
  margin-right: 6px;
}

.target {
  margin: 0 6px 0 12px;
}

.target-input {
  width: 67px;
  margin-right: 9px;
}

.help {
  margin-left: auto;
}

.inspector-foot {
  position: relative;
  display: flex;
  gap: 12px;
  padding: 4px 0 0 570px;
}

.inspector-foot .btn {
  min-width: 120px;
  padding: 0 20px;
}

.collapse {
  position: absolute;
  right: 11px;
  top: 57px;
}

/* dock */
.dock {
  width: 360px;
  display: flex;
  flex-direction: column;
}

.dock-top {
  display: flex;
  align-items: center;
  justify-content: flex-end;
  height: 18px;
  padding-right: 6px;
}

.panel {
  background-color: #edecee;
  margin-bottom: 3px;
}

.lab-body {
  height: 198px;
  padding: 73px 20px 0 14px;
  background-color: #d6d5d7;
  border: 2px solid #f0f0f1;
  border-top: 0;
  font-size: 17px;
}

.lab-row {
  display: flex;
  gap: 11px;
}

.lab-btn,
.lab-select {
  height: 27px;
  border: 1px solid #a9a9ab;
  border-bottom: 2px solid #8f8f91;
  background: linear-gradient(#fff, #ebebec);
}

.lab-btn {
  width: 93px;
}

.lab-select {
  display: flex;
  align-items: center;
  gap: 9px;
  flex: 1;
  padding: 0 10px 0 16px;
}

.lab-select select {
  height: 18px;
  line-height: 18px;
  border-right: 1px solid #bbb;
}

.lab-status {
  display: flex;
  align-items: center;
  justify-content: flex-end;
  gap: 16px;
  margin: 49px -5px 0 0;
  font-size: 16px;
}

.lab-status i {
  width: 18px;
  height: 18px;
  border: 2px solid #b5b5b7;
  border-radius: 50%;
  background-color: #ddd;
}

.insert-head {
  display: flex;
  align-items: center;
  gap: 12px;
  padding: 11px 6px 0 14px;
}

.insert-head .popup {
  width: 134px;
}

.insert-head hr {
  flex: 1;
  margin: 0;
  border: 0;
  border-top: 2px solid #bcbcbe;
}

.insert-body {
  display: flex;
  justify-content: space-between;
  height: 113px;
  padding: 4px 2px 4px 12px;
}

.insert-body ul {
  margin: 0;
  padding: 0;
  overflow: hidden;
  list-style: none;
}

.insert-body li {
  display: flex;
  align-items: center;
  gap: 22px;
  height: 41px;
}

.vscroll {
  display: flex;
  flex-direction: column;
  align-items: center;
  width: 23px;
  height: 105px;
  padding-top: 8px;
  border: 1px solid #ccc;
  background-color: #f7f7f8;
}

.vscroll i {
  width: 20px;
  height: 30px;
  margin-bottom: 20px;
  border: 4px solid #2f6fb8;
  border-radius: 10px;
  background: linear-gradient(90deg, #78b4ef, #c2e4ff, #78b4ef);
  box-shadow: 0 20px 0 -1px #d5d5d7;
}

.vscroll b {
  width: 21px;
  height: 22px;
  padding: 7px 6px;
  border-top: 1px solid #ddd;
  fill: #333;
}

.scope {
  width: 156px;
  margin: 3px auto 6px 101px;
}

.scope button {
  flex: 1;
}

.css-head {
  padding: 2px 6px 10px;
  height: 35px;
  background: linear-gradient(#dedddf, #edecee);
  font-weight: 600;
}

.rules {
  height: 117px;
  margin: 0 6px;
  border: 2px solid #9a9a9c;
  background-color: #fdfdfd;
}

.rules-main {
  display: flex;
  justify-content: space-between;
  height: 93px;
}

.rules-list {
  padding-left: 37px;
}

.rules-list span {
  display: block;
  height: 23px;
  padding: 0 4px;
  background-color: #aecbef;
}

.gutter {
  width: 22px;
  background: linear-gradient(90deg, #ccc, #f5f5f5 50%, #fdfdfd);
}

.hscroll {
  display: flex;
  height: 20px;
  padding-right: 22px;
  background-color: #f7f7f8;
}

.hscroll .track {
  flex: 1;
  border-radius: 0 10px 10px 0;
  background: linear-gradient(#d2d2d4, #fff 60%);
  border-right: 2px solid #aaa;
  padding-left: 8px;
}

.hscroll i {
  display: block;
  height: 20px;
  border: 3px solid #3a7cbf;
  border-radius: 10px;
  background: linear-gradient(#5fa6e8, #a2d2f8 45%, #5cabed 55%, #9adcff);
}

.long {
  width: 221px;
}

.short {
  width: 122px;
}

.hscroll b {
  width: 22px;
  padding: 6px 7px;
  border-right: 1px solid #ddd;
  fill: #333;
}

.props {
  position: relative;
  padding-top: 17px;
  height: 38px;
}

.props i {
  position: absolute;
  left: 151px;
  top: 12px;
  width: 55px;
  height: 3px;
  background-color: #ccc;
}

.css-tools {
  display: flex;
  align-items: center;
  gap: 10px;
  height: 31px;
  padding: 0 7px 4px 12px;
}

.az {
  display: flex;
  align-items: center;
  font-size: 14px;
  font-weight: bold;
}

.az small {
  padding-top: 6px;
  font-size: 13px;
}

.sorted {
  height: 22px;
  margin-left: -6px;
  padding: 1px 2px;
  border: 2px solid #a9a9ab;
  border-radius: 4px;
}

.push {
  margin-left: auto;
}

.catalyst {
  height: 29px;
}

.files {
  flex: 1;
  display: flex;
  flex-direction: column;
  margin: 0;
}

.files-head {
  display: flex;
  gap: 10px;
  padding: 8px 12px 0;
}

.files-head .popup {
  display: flex;
  align-items: center;
  height: 30px;
}

.files-head .cap {
  width: 30px;
}

.site {
  width: 188px;
  padding-left: 9px;
}

.site select {
  padding-left: 6px;
}

.view {
  flex: 1;
}

.view select {
  padding-left: 21px;
}

.files-tools {
  display: flex;
  align-items: center;
  justify-content: space-between;
  height: 38px;
  padding: 0 26px 6px 16px;
}

.files-tools i {
  height: 24px;
  border-left: 2px dotted #aaa;
}

.files-box {
  flex: 1;
  display: flex;
  flex-direction: column;
  margin: 0 4px 0 4px;
  border: 3px solid #7cabd2;
  background-color: #fdfdfd;
}

table {
  width: 100%;
  border-collapse: collapse;
}

th {
  height: 23px;
  padding: 0;
  text-align: left;
  font-weight: 600;
}

.name {
  padding-left: 40px;
  background: linear-gradient(#a5cdf1, #6fb0ea 50%, #9bd0f7);
}

.name svg {
  float: right;
  margin: 6px 6px 0 0;
}

.size {
  width: 84px;
  padding: 0 16px 0 0;
  text-align: right;
  background-color: #f2f2f3;
}

td {
  padding: 0;
}

.file {
  display: flex;
  align-items: center;
  height: 24px;
  padding-left: 13px;
}

.file .folder {
  margin: 0 22px 0 15px;
}

.files-space {
  flex: 1;
  display: flex;
  justify-content: flex-end;
}

.files-foot {
  display: flex;
  align-items: center;
  justify-content: space-between;
  height: 35px;
  padding: 0 24px 4px 8px;
}

.log {
  width: 58px;
  height: 22px;
}
```
